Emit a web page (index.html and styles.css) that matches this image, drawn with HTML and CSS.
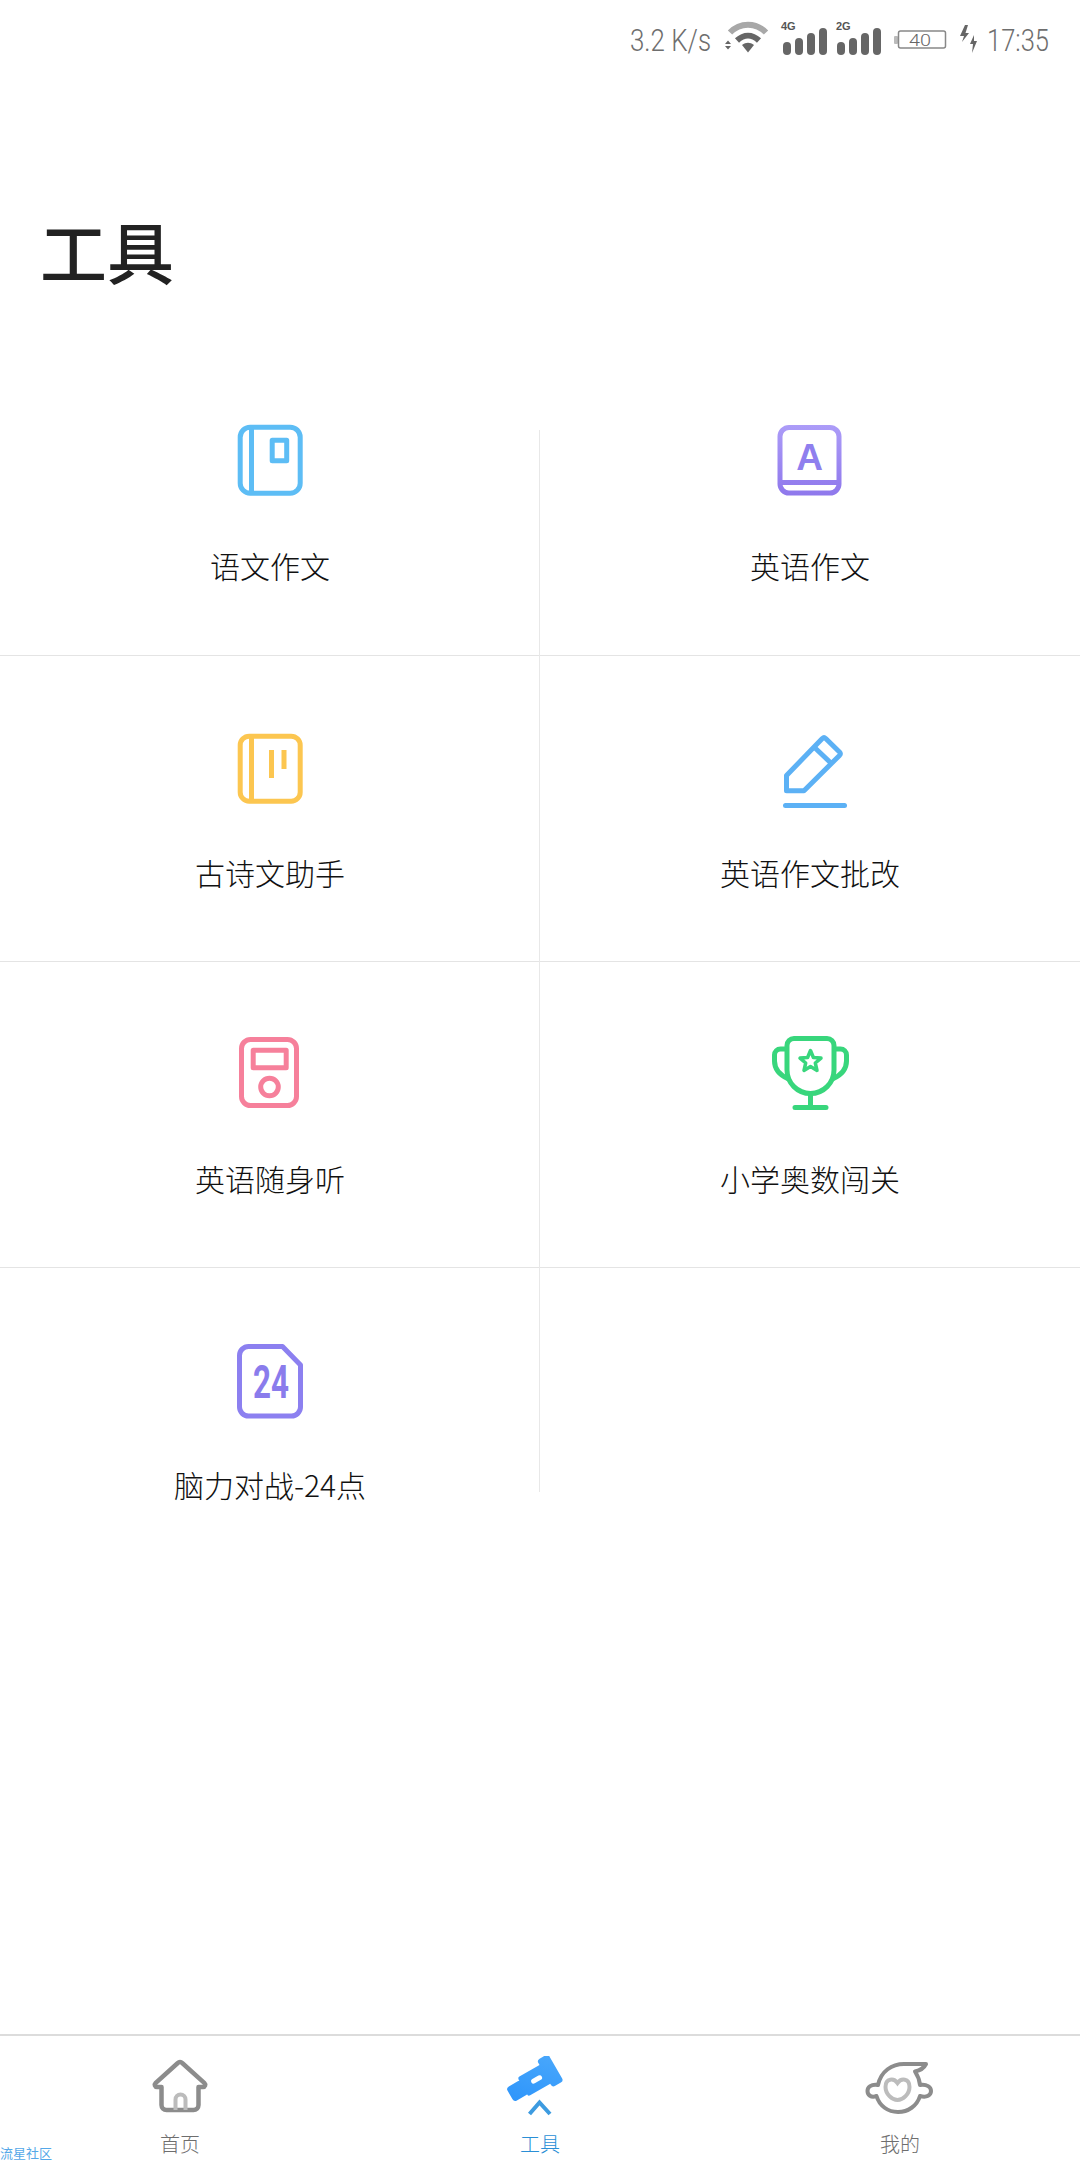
FILE: index.html
```html
<!DOCTYPE html>
<html lang="zh-CN">
<head>
<meta charset="utf-8">
<title>工具</title>
<link rel="stylesheet" href="styles.css">
</head>
<body>
<div class="page">
  <div class="status">
    <svg class="s-speed" width="84" height="36" viewBox="0 0 84 36">
      <text class="lcd" x="1" y="29" textLength="81" lengthAdjust="spacingAndGlyphs">3.2 K/s</text>
    </svg>
    <svg class="s-wifi" width="46" height="36" viewBox="0 0 46 36">
      <path class="wifi-arc-light" d="M5 12.500C15 2 31 2 41 12.500"/>
      <path class="wifi-arc" d="M12 20.500C19 14 27 14 34 20.500"/>
      <path class="wifi-fill" d="M17 25C21 22 25 22 29 25L23 32.500Z"/>
      <path class="wifi-fill" d="M0 24L3 20.500L6 24ZM0 26L3 29.500L6 26Z"/>
    </svg>
    <svg class="s-signal" width="46" height="36" viewBox="0 0 46 36">
      <text class="net" x="0" y="9">4G</text>
      <rect class="bar" x="2" y="21" width="8" height="13" rx="4"/>
      <rect class="bar" x="14" y="17" width="8" height="17" rx="4"/>
      <rect class="bar" x="26" y="12" width="8" height="22" rx="4"/>
      <rect class="bar" x="38" y="7" width="8" height="27" rx="4"/>
    </svg>
    <svg class="s-signal" width="46" height="36" viewBox="0 0 46 36">
      <text class="net" x="0" y="9">2G</text>
      <rect class="bar" x="1" y="21" width="8" height="13" rx="4"/>
      <rect class="bar" x="13" y="17" width="8" height="17" rx="4"/>
      <rect class="bar" x="25" y="12" width="8" height="22" rx="4"/>
      <rect class="bar" x="37" y="7" width="8" height="27" rx="4"/>
    </svg>
    <svg class="s-batt" width="52" height="24" viewBox="0 0 52 24">
      <rect class="batt-tip" x="0" y="8" width="4" height="8" rx="1"/>
      <rect class="batt-body" x="4.500" y="3" width="47" height="17" rx="2"/>
      <text class="batt-text" x="15" y="18" textLength="22" lengthAdjust="spacingAndGlyphs">40</text>
    </svg>
    <svg class="s-bolt" width="18" height="28" viewBox="0 0 18 28">
      <path class="wifi-fill" d="M5 0L0 11H4L2 17L9 8H5.500L8 0Z"/>
      <path class="wifi-fill" d="M14 10L10 19H13L12 28L17 16H14Z"/>
    </svg>
    <svg class="s-clock" width="64" height="36" viewBox="0 0 64 36">
      <text class="lcd" x="1" y="29" textLength="62" lengthAdjust="spacingAndGlyphs">17:35</text>
    </svg>
  </div>

  <header class="head"><h1 class="title">工具</h1></header>

  <main class="grid">
    <a class="cell">
      <svg class="icon" width="80" height="90" viewBox="0 0 80 90">
        <g class="line sky"><rect x="10.200" y="8.200" width="60" height="66" rx="10"/><path d="M21.500 8V74"/><rect x="42.200" y="21.200" width="14.500" height="20.500"/></g>
      </svg>
      <span class="label">语文作文</span>
    </a>
    <a class="cell">
      <svg class="icon" width="80" height="90" viewBox="0 0 80 90">
        <defs><linearGradient id="gv" x1="0" y1="6" x2="0" y2="76" gradientUnits="userSpaceOnUse"><stop offset="0" stop-color="#ac9cf8"/><stop offset="1" stop-color="#8f78ec"/></linearGradient></defs>
        <g fill="none" stroke="url(#gv)" stroke-width="5"><rect x="10" y="8.500" width="59" height="65.500" rx="9"/><path d="M10 63.500H69"/></g>
        <text class="glyph-a" x="39.500" y="51">A</text>
      </svg>
      <span class="label">英语作文</span>
    </a>
    <a class="cell">
      <svg class="icon" width="80" height="90" viewBox="0 0 80 90">
        <g class="line amber"><rect x="10.200" y="10.200" width="60" height="65" rx="9"/><path d="M21.500 10V75M41.500 24V52M54 24V43"/></g>
      </svg>
      <span class="label">古诗文助手</span>
    </a>
    <a class="cell">
      <svg class="icon" width="80" height="90" viewBox="0 0 80 90">
        <g class="line azure"><path d="M52.300 12.500a2.500 2.500 0 0 1 3.400 0L69.500 26a2.500 2.500 0 0 1 0 3.400L34 64.800H16.500V49.500Z"/><path d="M43.500 20.500L62 38"/><path class="cap" d="M15.500 79.500H74.500"/></g>
      </svg>
      <span class="label">英语作文批改</span>
    </a>
    <a class="cell">
      <svg class="icon" width="80" height="90" viewBox="0 0 80 90">
        <g class="line rose"><rect x="11.500" y="7.500" width="55" height="66" rx="9"/><rect x="23.200" y="18.200" width="33" height="17.500"/><circle cx="39.500" cy="55" r="8.800"/></g>
      </svg>
      <span class="label">英语随身听</span>
    </a>
    <a class="cell">
      <svg class="icon" width="80" height="90" viewBox="0 0 80 90">
        <g class="line green"><path d="M24 6.500H57a7 7 0 0 1 7 7V38a23.500 23.500 0 0 1-47 0V13.500a7 7 0 0 1 7-7Z"/><path d="M17 17H10.500a6 6 0 0 0-6 6V29c0 8 5 14 14 18M64 17H70.500a6 6 0 0 1 6 6V29c0 8-5 14-14 18"/><path class="cap" d="M40.500 62V74M25 75.500H56"/><path class="star" d="M40.500 18.500L43.400 25.500L51 26.100L45.300 31L47 38.400L40.500 34.500L34 38.400L35.700 31L30 26.100L37.600 25.500Z"/></g>
      </svg>
      <span class="label">小学奥数闯关</span>
    </a>
    <a class="cell cell-last">
      <svg class="icon" width="80" height="90" viewBox="0 0 80 90">
        <g class="line violet"><path d="M18.500 8.500H52.500L70.500 27V69a9 9 0 0 1-9 9H18.500a9 9 0 0 1-9-9V17.500a9 9 0 0 1 9-9Z"/></g>
        <text class="glyph-24" x="23" y="60" textLength="36" lengthAdjust="spacingAndGlyphs">24</text>
      </svg>
      <span class="label">脑力对战-24点</span>
    </a>
  </main>

  <span class="mark">流星社区</span>

  <nav class="tabs">
    <a class="tab">
      <svg class="tab-icon" width="80" height="64" viewBox="0 0 80 64">
        <path class="t-grey" d="M21.500 31H17a2.200 2.200 0 0 1-1.500-3.800L37.800 7a3 3 0 0 1 4.400 0L64.500 27.200A2.200 2.200 0 0 1 63 31H58.500V49a5 5 0 0 1-5 5H26.500a5 5 0 0 1-5-5Z"/>
        <path class="t-light" d="M35.500 54V43.500a5 5 0 0 1 10 0V54"/>
      </svg>
      <span class="tab-label">首页</span>
    </a>
    <a class="tab tab-on">
      <svg class="tab-icon" width="80" height="64" viewBox="0 0 80 64">
        <defs><linearGradient id="gb" x1="20" y1="40" x2="60" y2="5" gradientUnits="userSpaceOnUse"><stop offset="0" stop-color="#2f96fb"/><stop offset="1" stop-color="#4aa8fb"/></linearGradient></defs>
        <g fill="url(#gb)" transform="translate(4 3) rotate(-30 38 20) translate(-2 -1.500) scale(1.080)">
          <rect x="41.500" y="2.500" width="12" height="29" rx="3"/>
          <rect x="18" y="7.500" width="26" height="20" rx="2"/>
          <rect x="4" y="10.500" width="16" height="15" rx="3"/>
          <rect class="t-hole" x="27" y="15.500" width="11" height="4.500" rx="2.250"/>
        </g>
        <path class="t-caret" d="M29.500 58L39.500 46.500L50 58"/>
      </svg>
      <span class="tab-label">工具</span>
    </a>
    <a class="tab">
      <svg class="tab-icon" width="80" height="64" viewBox="0 0 80 64">
        <path class="t-grey thin" d="M18 29C21 15 32 8 44 8H66C64 12 60 14.500 55 15.500C58 20 59.500 24 60 29C67 28 71 31 71 35C71 39 67 42 60 40C57 50 48 56 38 56C28 56 19.500 50 16.500 40C11 42 7.500 39 7.500 35C7.500 31 11 28 18 29Z"/>
        <path class="t-light" d="M37.500 27C34 22 25.500 22 25.500 31C25.500 38 32 44 37.500 44C43 44 49.500 38 49.500 31C49.500 22 41 22 37.500 27Z"/>
      </svg>
      <span class="tab-label">我的</span>
    </a>
  </nav>
</div>
</body>
</html>
```

FILE: styles.css
```css
* { box-sizing: border-box; }
html, body { margin: 0; padding: 0; background: #fff; }
body { font-family: "Noto Sans CJK SC", "Noto Sans", sans-serif; }
.page { position: relative; width: 1080px; height: 2160px; display: flex; flex-direction: column; overflow: hidden; }

/* status bar */
.status { height: 76px; padding: 3px 30px 0 0; display: flex; justify-content: flex-end; align-items: center; color: #777; }
.status svg { display: block; flex: none; overflow: visible; }
.lcd { font: 300 32px "Roboto", "Liberation Sans", sans-serif; fill: #6e6e6e; }
.s-wifi { margin: -3px 10px 0 12px; }
.s-signal { margin: -2px 9px 0 0; }
.s-batt { margin: 0 14px 0 3px; }
.s-bolt { margin: -1px 8px 0 0; }
.wifi-arc-light { fill: none; stroke: #a8a8a8; stroke-width: 6; }
.wifi-arc { fill: none; stroke: #666; stroke-width: 6; }
.wifi-fill { fill: #666; }
.bar { fill: #666; }
.net { font: 700 11px "Liberation Sans", sans-serif; fill: #555; }
.batt-tip { fill: #bbb; }
.batt-body { fill: none; stroke: #888; stroke-width: 1.500; }
.batt-text { font: 300 17px "Roboto", sans-serif; fill: #666; }

/* header */
.head { height: 273px; padding: 129px 0 0 40px; }
.title { margin: 0; font-size: 67px; line-height: 90px; font-weight: 500; color: #222; }

/* grid */
.grid { position: relative; display: grid; grid-template-columns: 540px 540px; grid-template-rows: 307px 306px 306px 224px; }
.grid::before { content: ""; position: absolute; left: 539px; top: 81px; bottom: 0; width: 1px; background: #e8e8e8; }
.cell { display: flex; flex-direction: column; align-items: center; padding-top: 70px; border-bottom: 1px solid #e4e4e4; }
.cell-last { border-bottom: 0; }
.icon { display: block; flex: none; }
.label { margin-top: 36px; font-size: 30px; line-height: 40px; font-weight: 300; color: #111; white-space: nowrap; }

/* icon strokes */
.line { fill: none; stroke-width: 5; stroke-linejoin: round; }
.cap { stroke-linecap: round; stroke-width: 5; }
.star { stroke-width: 3.500; }
.sky { stroke: #5dbdf5; }
.amber { stroke: #fcc650; }
.azure { stroke: #5cb1f5; }
.rose { stroke: #f6809b; }
.green { stroke: #38d67c; }
.violet { stroke: #8c80f0; }
.glyph-a { font: 700 37px "Liberation Sans", sans-serif; fill: #8f7fee; text-anchor: middle; }
.glyph-24 { font: 700 46px "Roboto", sans-serif; fill: #8a7cec; }

/* tab bar */
.mark { position: absolute; left: 0; top: 2146px; font-size: 13px; line-height: 14px; color: #55a8e8; }
.tabs { margin-top: auto; height: 126px; padding-top: 20px; border-top: 2px solid #dcdcdc; display: grid; grid-template-columns: repeat(3, 360px); }
.tab { display: flex; flex-direction: column; align-items: center; }
.tab-icon { display: block; flex: none; }
.tab-label { margin-top: 10px; font-size: 20px; line-height: 28px; font-weight: 300; color: #6e6e6e; }
.tab-on .tab-label { color: #2a8fd6; }
.t-grey { fill: none; stroke: #8c8c8c; stroke-width: 4.500; stroke-linejoin: round; }
.t-grey.thin { stroke-width: 4; }
.t-light { fill: none; stroke: #bcbcbc; stroke-width: 4; }
.t-hole { fill: #fff; }
.t-caret { fill: none; stroke: #3d9be0; stroke-width: 4; }
```
